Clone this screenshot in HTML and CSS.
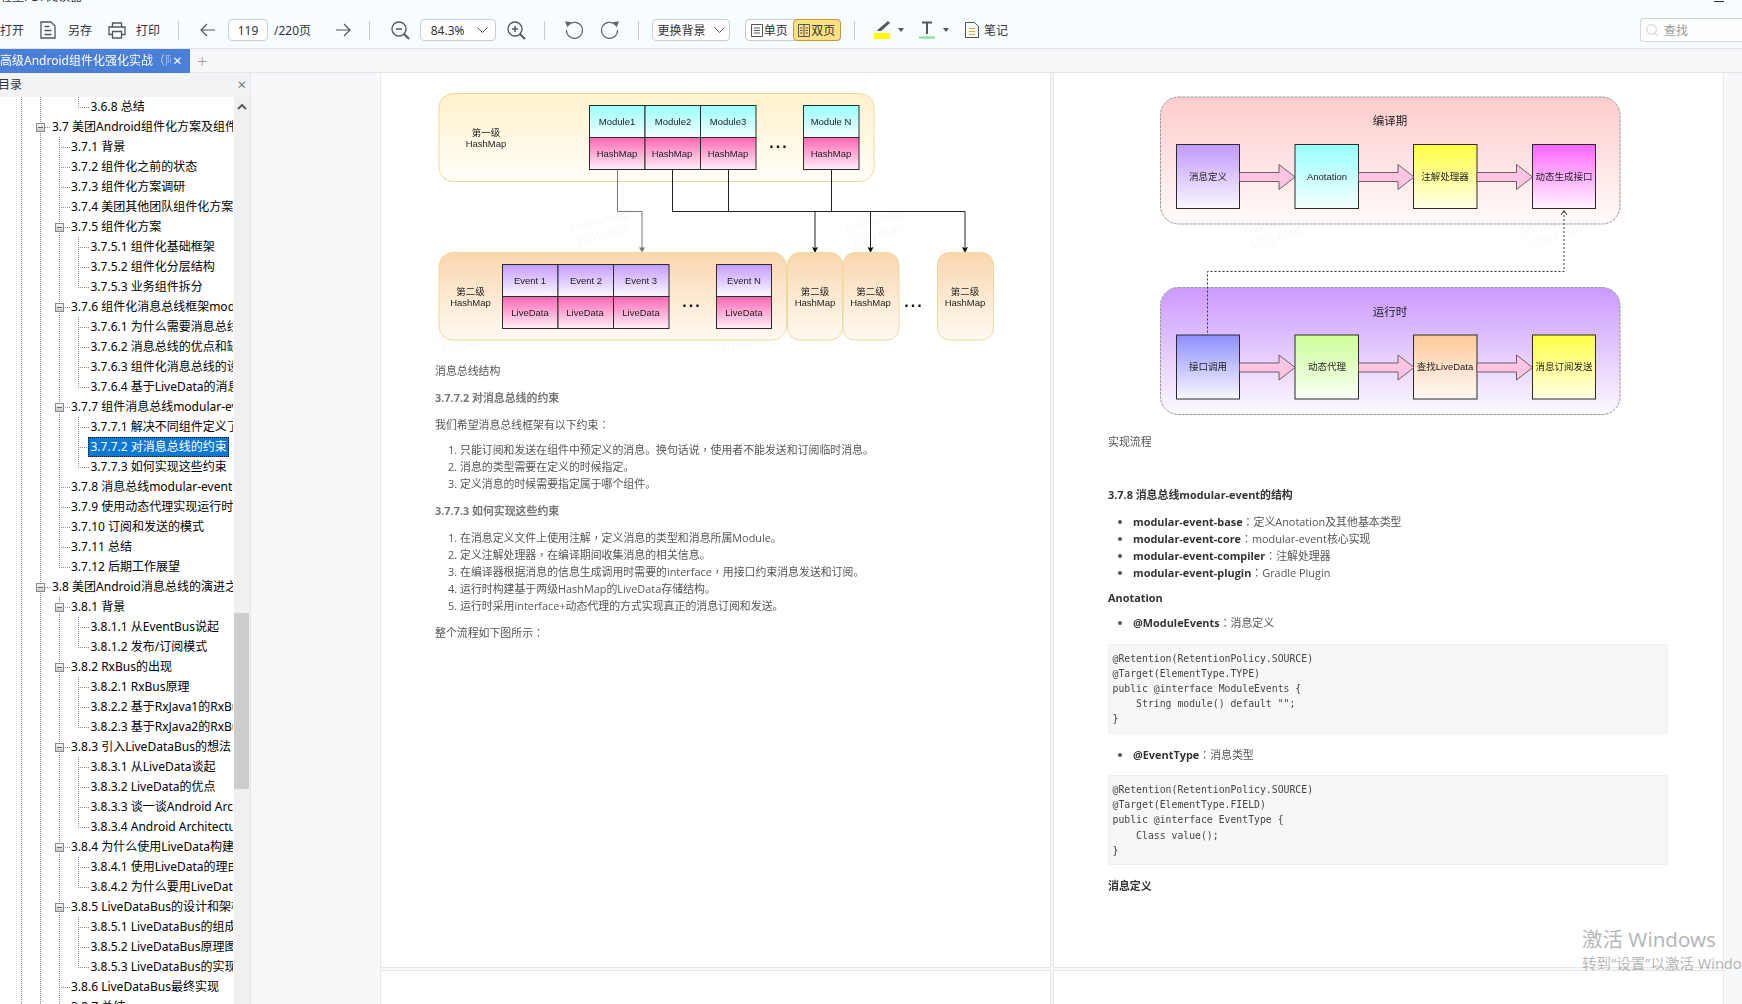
FILE: index.html
```html
<!DOCTYPE html>
<html lang="zh-CN">
<head>
<meta charset="UTF-8" />
<title>PDF阅读器</title>
<link rel="stylesheet" href="styles.css">
</head>
<body>
<div class="app">
  <div class="titlebar">
    <span class="app-name">轻量PDF阅读器</span>
    <span class="min-btn"></span>
  </div>

  <div class="toolbar">
    <span class="label">打开</span>
    <svg class="ico save" width="16" height="18" viewBox="0 0 16 18"><path d="M1 1h10l4 4v12H1z M4.500 5.500h5 M4.500 9.500h7 M4.500 13.500h7" fill="none" stroke="#555" stroke-width="1.300"/></svg>
    <span class="label gap12">另存</span>
    <svg class="ico print" width="18" height="17" viewBox="0 0 18 17"><path d="M4.500 5V1h9v4 M4 12.500H1V5h16v7.500h-3 M4.500 9.500h9V16h-9z" fill="none" stroke="#555" stroke-width="1.300"/></svg>
    <span class="label gap10">打印</span>
    <span class="sep"></span>

    <svg class="ico back" width="15" height="14" viewBox="0 0 15 14"><path d="M15 7H1 M7 1L1 7l6 6" fill="none" stroke="#555" stroke-width="1.200"/></svg>
    <span class="field page-no">119</span>
    <span class="label total">/220页</span>
    <svg class="ico next" width="15" height="14" viewBox="0 0 15 14"><path d="M0 7h14 M8 1l6 6-6 6" fill="none" stroke="#555" stroke-width="1.200"/></svg>
    <span class="sep"></span>

    <svg class="ico zoom-out" width="19" height="19" viewBox="0 0 19 19"><circle cx="8" cy="8" r="7" fill="none" stroke="#555" stroke-width="1.300"/><path d="M5 8h6" stroke="#555" stroke-width="1.500"/><path d="M13 13l5 5" stroke="#555" stroke-width="2"/></svg>
    <span class="field zoom-select">84.3%<svg width="11" height="6" viewBox="0 0 11 6"><path d="M.500.500l5 5 5-5" fill="none" stroke="#555"/></svg></span>
    <svg class="ico zoom-in" width="19" height="19" viewBox="0 0 19 19"><circle cx="8" cy="8" r="7" fill="none" stroke="#555" stroke-width="1.300"/><path d="M5 8h6 M8 5v6" stroke="#555" stroke-width="1.500"/><path d="M13 13l5 5" stroke="#555" stroke-width="2"/></svg>
    <span class="sep"></span>

    <svg class="ico undo" width="20" height="19" viewBox="0 0 20 19"><path d="M5 3.500A8 8 0 1 1 2.500 9" fill="none" stroke="#666" stroke-width="1.200"/><path d="M1 .500l6 .500-3.500 5.500z" fill="#666"/></svg>
    <svg class="ico redo" width="20" height="19" viewBox="0 0 20 19"><path d="M15 3.500A8 8 0 1 0 17.500 9" fill="none" stroke="#666" stroke-width="1.200"/><path d="M19 .500l-6 .500 3.500 5.500z" fill="#666"/></svg>
    <span class="sep"></span>

    <span class="field bg-select">更换背景<svg width="11" height="6" viewBox="0 0 11 6"><path d="M.500.500l5 5 5-5" fill="none" stroke="#555"/></svg></span>

    <div class="seg">
      <span class="seg-item"><svg width="12" height="13" viewBox="0 0 12 13"><path d="M.500.500h11v12H.500z M3 4h6 M3 6.500h6 M3 9h6" fill="none" stroke="#555"/></svg>单页</span>
      <span class="seg-item on"><svg width="12" height="13" viewBox="0 0 12 13"><path d="M.500.500h11v12H.500z M6 .500v12 M2 4h2.500 M2 6.500h2.500 M2 9h2.500 M7.500 4H10 M7.500 6.500H10 M7.500 9H10" fill="none" stroke="#555"/></svg>双页</span>
    </div>
    <span class="sep sep-tools"></span>

    <svg class="ico pen" width="16" height="18" viewBox="0 0 16 18"><path d="M14 0l2 2-9 8H3.500L3 9.500z" fill="#555"/><path d="M0 12h16v6H0z" fill="#ffff00"/></svg>
    <span class="caret"></span>
    <svg class="ico text-tool" width="16" height="18" viewBox="0 0 16 18"><path d="M3 1.500h10 M8 1.500V13" fill="none" stroke="#555" stroke-width="2"/><path d="M0 16.500h16" stroke="#7ed99a" stroke-width="2"/></svg>
    <span class="caret"></span>
    <svg class="ico note" width="14" height="16" viewBox="0 0 14 16"><path d="M.500.500h9l4 4v11H.500z" fill="none" stroke="#555"/><path d="M4 6.500h6 M4 9.500h6 M4 12.500h6" stroke="#e2a33a"/></svg>
    <span class="label gap5">笔记</span>

    <div class="search">
      <svg width="12" height="13" viewBox="0 0 12 13"><circle cx="5.500" cy="5.500" r="4.800" fill="none" stroke="#ccc"/><path d="M9 9l3 3.500" stroke="#ccc"/></svg>
      <span>查找</span>
    </div>
  </div>

  <div class="tabbar">
    <div class="tab"><span class="tab-name">高级Android组件化强化实战（阿</span><span class="tab-close">×</span></div>
    <span class="tab-add">+</span>
  </div>

  <div class="body">
    <aside class="sidebar">
      <div class="side-head"><span class="side-title">目录</span><span class="side-close">×</span></div>
      <div class="tree-wrap">
        <div class="tree">
          <div class="row l4 last no59">3.6.8 总结</div>
          <div class="row l2"><i class="exp"></i>3.7 美团Android组件化方案及组件消息总线modular-event实战</div>
          <div class="row l3">3.7.1 背景</div>
          <div class="row l3">3.7.2 组件化之前的状态</div>
          <div class="row l3">3.7.3 组件化方案调研</div>
          <div class="row l3">3.7.4 美团其他团队组件化方案</div>
          <div class="row l3"><i class="exp"></i>3.7.5 组件化方案</div>
          <div class="row l4">3.7.5.1 组件化基础框架</div>
          <div class="row l4">3.7.5.2 组件化分层结构</div>
          <div class="row l4 last">3.7.5.3 业务组件拆分</div>
          <div class="row l3"><i class="exp"></i>3.7.6 组件化消息总线框架modular-event</div>
          <div class="row l4">3.7.6.1 为什么需要消息总线</div>
          <div class="row l4">3.7.6.2 消息总线的优点和缺点</div>
          <div class="row l4">3.7.6.3 组件化消息总线的设计难点</div>
          <div class="row l4 last">3.7.6.4 基于LiveData的消息总线</div>
          <div class="row l3"><i class="exp"></i>3.7.7 组件消息总线modular-event的实现</div>
          <div class="row l4">3.7.7.1 解决不同组件定义了相同的消息</div>
          <div class="row l4"><span class="selected">3.7.7.2 对消息总线的约束</span></div>
          <div class="row l4 last">3.7.7.3 如何实现这些约束</div>
          <div class="row l3">3.7.8 消息总线modular-event的结构</div>
          <div class="row l3">3.7.9 使用动态代理实现运行时注册</div>
          <div class="row l3">3.7.10 订阅和发送的模式</div>
          <div class="row l3">3.7.11 总结</div>
          <div class="row l3 last3">3.7.12 后期工作展望</div>
          <div class="row l2"><i class="exp"></i>3.8 美团Android消息总线的演进之路</div>
          <div class="row l3"><i class="exp"></i>3.8.1 背景</div>
          <div class="row l4">3.8.1.1 从EventBus说起</div>
          <div class="row l4 last">3.8.1.2 发布/订阅模式</div>
          <div class="row l3"><i class="exp"></i>3.8.2 RxBus的出现</div>
          <div class="row l4">3.8.2.1 RxBus原理</div>
          <div class="row l4">3.8.2.2 基于RxJava1的RxBus实现</div>
          <div class="row l4 last">3.8.2.3 基于RxJava2的RxBus实现</div>
          <div class="row l3"><i class="exp"></i>3.8.3 引入LiveDataBus的想法</div>
          <div class="row l4">3.8.3.1 从LiveData谈起</div>
          <div class="row l4">3.8.3.2 LiveData的优点</div>
          <div class="row l4">3.8.3.3 谈一谈Android Architecture Components</div>
          <div class="row l4 last">3.8.3.4 Android Architecture Components</div>
          <div class="row l3"><i class="exp"></i>3.8.4 为什么使用LiveData构建数据通信总线</div>
          <div class="row l4">3.8.4.1 使用LiveData的理由</div>
          <div class="row l4 last">3.8.4.2 为什么要用LiveDataBus</div>
          <div class="row l3"><i class="exp"></i>3.8.5 LiveDataBus的设计和架构</div>
          <div class="row l4">3.8.5.1 LiveDataBus的组成</div>
          <div class="row l4">3.8.5.2 LiveDataBus原理图</div>
          <div class="row l4 last">3.8.5.3 LiveDataBus的实现</div>
          <div class="row l3">3.8.6 LiveDataBus最终实现</div>
          <div class="row l3">3.8.7 总结</div>
        </div>
        <div class="scrollbar">
          <svg class="scroll-up" width="10" height="6" viewBox="0 0 10 6"><path d="M1 5l4-4 4 4" fill="none" stroke="#555" stroke-width="1.800"/></svg>
          <div class="thumb"></div>
        </div>
      </div>
    </aside>

    <main class="viewer">
      <div class="pages">
        <section class="page">
          <svg class="fig fig-bus" width="669" height="279" viewBox="381 73 669 279">
            <defs>
              <linearGradient id="gYellow" x1="0" y1="0" x2="0" y2="1"><stop offset="0" stop-color="#fff2cc"/><stop offset="1" stop-color="#fffef9"/></linearGradient>
              <linearGradient id="gOrange" x1="0" y1="0" x2="0" y2="1"><stop offset="0" stop-color="#fad7ac"/><stop offset="1" stop-color="#fffaf4"/></linearGradient>
              <linearGradient id="gCyan" x1="0" y1="0" x2="0" y2="1"><stop offset="0" stop-color="#99ffff"/><stop offset="1" stop-color="#f2ffff"/></linearGradient>
              <linearGradient id="gPink" x1="0" y1="0" x2="0" y2="1"><stop offset="0" stop-color="#ff66b3"/><stop offset="1" stop-color="#fff0f8"/></linearGradient>
              <linearGradient id="gPurple" x1="0" y1="0" x2="0" y2="1"><stop offset="0" stop-color="#c59cff"/><stop offset="1" stop-color="#fbf8ff"/></linearGradient>
            </defs>

            <g class="mark">
              <text transform="translate(437 122) rotate(-15)">liaohailiang<tspan x="2" dy="15">12014649</tspan></text>
              <text transform="translate(710 115) rotate(-15)">liaohailiang<tspan x="2" dy="15">12014649</tspan></text>
              <text transform="translate(571 232) rotate(-15)">liaohailiang<tspan x="2" dy="15">12014649</tspan></text>
              <text transform="translate(847 232) rotate(-15)">liaohailiang<tspan x="2" dy="15">12014649</tspan></text>
              <text transform="translate(437 341) rotate(-15)">liaohailiang<tspan x="2" dy="15">12014649</tspan></text>
              <text transform="translate(710 341) rotate(-15)">liaohailiang<tspan x="2" dy="15">12014649</tspan></text>
            </g>

            <rect class="group" x="439" y="93.500" width="435" height="88" rx="14" fill="url(#gYellow)"/>
            <g class="cells">
              <rect x="589.500" y="105.500" width="55.500" height="32" fill="url(#gCyan)"/>
              <rect x="645" y="105.500" width="55.500" height="32" fill="url(#gCyan)"/>
              <rect x="700.500" y="105.500" width="55.500" height="32" fill="url(#gCyan)"/>
              <rect x="803.500" y="105.500" width="55.500" height="32" fill="url(#gCyan)"/>
              <rect x="589.500" y="137.500" width="55.500" height="32" fill="url(#gPink)"/>
              <rect x="645" y="137.500" width="55.500" height="32" fill="url(#gPink)"/>
              <rect x="700.500" y="137.500" width="55.500" height="32" fill="url(#gPink)"/>
              <rect x="803.500" y="137.500" width="55.500" height="32" fill="url(#gPink)"/>
            </g>
            <g class="txt">
              <text x="486" y="136">第一级</text><text x="486" y="147">HashMap</text>
              <text x="617" y="125">Module1</text><text x="673" y="125">Module2</text><text x="728" y="125">Module3</text><text x="831" y="125">Module N</text>
              <text x="617" y="157">HashMap</text><text x="672" y="157">HashMap</text><text x="728" y="157">HashMap</text><text x="831" y="157">HashMap</text>
            </g>
            <text class="dots" x="779" y="148">...</text>

            <path class="link thin" d="M617.500 169.500V211.500H642V248"/>
            <path class="tip thin-tip" d="M639 247.500h6l-3 5z"/>
            <path class="link" d="M672.500 169.500V211.500H965V248 M728.500 169.500V211.500 M831.500 169.500V211.500 M815 211.500V248 M870.500 211.500V248"/>
            <path class="tip" d="M812 247l3 1 3-1-3 6z M867.500 247l3 1 3-1-3 6z M962 247l3 1 3-1-3 6z"/>

            <rect class="group" x="439" y="252.500" width="347.500" height="87.500" rx="14" fill="url(#gOrange)"/>
            <rect class="group" x="787.500" y="252.500" width="55" height="87.500" rx="12" fill="url(#gOrange)"/>
            <rect class="group" x="843" y="252.500" width="56" height="87.500" rx="12" fill="url(#gOrange)"/>
            <rect class="group" x="937.500" y="252.500" width="56" height="87.500" rx="12" fill="url(#gOrange)"/>
            <g class="cells">
              <rect x="502.500" y="264.500" width="55.500" height="32" fill="url(#gPurple)"/>
              <rect x="558" y="264.500" width="55.500" height="32" fill="url(#gPurple)"/>
              <rect x="613.500" y="264.500" width="55.500" height="32" fill="url(#gPurple)"/>
              <rect x="716.500" y="264.500" width="55" height="32" fill="url(#gPurple)"/>
              <rect x="502.500" y="296.500" width="55.500" height="32" fill="url(#gPink)"/>
              <rect x="558" y="296.500" width="55.500" height="32" fill="url(#gPink)"/>
              <rect x="613.500" y="296.500" width="55.500" height="32" fill="url(#gPink)"/>
              <rect x="716.500" y="296.500" width="55" height="32" fill="url(#gPink)"/>
            </g>
            <g class="txt">
              <text x="470.500" y="295">第二级</text><text x="470.500" y="306">HashMap</text>
              <text x="815" y="295">第二级</text><text x="815" y="306">HashMap</text>
              <text x="870.500" y="295">第二级</text><text x="870.500" y="306">HashMap</text>
              <text x="965" y="295">第二级</text><text x="965" y="306">HashMap</text>
              <text x="530" y="284">Event 1</text><text x="586" y="284">Event 2</text><text x="641" y="284">Event 3</text><text x="744" y="284">Event N</text>
              <text x="530" y="316">LiveData</text><text x="585" y="316">LiveData</text><text x="641" y="316">LiveData</text><text x="744" y="316">LiveData</text>
            </g>
            <text class="dots" x="692" y="307">...</text>
            <text class="dots" x="914" y="307">...</text>
          </svg>

          <div class="doc">
            <p>消息总线结构</p>
            <p class="sub">3.7.7.2 对消息总线的约束</p>
            <p>我们希望消息总线框架有以下约束<span class="pn" lang="zh-Hant">：</span></p>
            <ol class="tight">
              <li>只能订阅和发送在组件中预定义的消息。换句话说<span class="pn" lang="zh-Hant">，</span>使用者不能发送和订阅临时消息。</li>
              <li>消息的类型需要在定义的时候指定。</li>
              <li>定义消息的时候需要指定属于哪个组件。</li>
            </ol>
            <p class="sub">3.7.7.3 如何实现这些约束</p>
            <ol>
              <li>在消息定义文件上使用注解<span class="pn" lang="zh-Hant">，</span>定义消息的类型和消息所属Module。</li>
              <li>定义注解处理器<span class="pn" lang="zh-Hant">，</span>在编译期间收集消息的相关信息。</li>
              <li>在编译器根据消息的信息生成调用时需要的interface<span class="pn" lang="zh-Hant">，</span>用接口约束消息发送和订阅。</li>
              <li>运行时构建基于两级HashMap的LiveData存储结构。</li>
              <li>运行时采用interface+动态代理的方式实现真正的消息订阅和发送。</li>
            </ol>
            <p>整个流程如下图所示<span class="pn" lang="zh-Hant">：</span></p>
          </div>
        </section>

        <section class="page">
          <svg class="fig fig-flow" width="669" height="350" viewBox="1054 73 669 350">
            <defs>
              <linearGradient id="fRed" x1="0" y1="0" x2="0" y2="1"><stop offset="0" stop-color="#ffcccc"/><stop offset="1" stop-color="#fffafa"/></linearGradient>
              <linearGradient id="fViolet" x1="0" y1="0" x2="0" y2="1"><stop offset="0" stop-color="#cc99ff"/><stop offset="1" stop-color="#fcfaff"/></linearGradient>
              <linearGradient id="c1" x1="0" y1="0" x2="0" y2="1"><stop offset="0" stop-color="#c199fc"/><stop offset="1" stop-color="#fbf8ff"/></linearGradient>
              <linearGradient id="c2" x1="0" y1="0" x2="0" y2="1"><stop offset="0" stop-color="#99ffff"/><stop offset="1" stop-color="#f5ffff"/></linearGradient>
              <linearGradient id="c3" x1="0" y1="0" x2="0" y2="1"><stop offset="0" stop-color="#ffff44"/><stop offset="1" stop-color="#ffffe8"/></linearGradient>
              <linearGradient id="c4" x1="0" y1="0" x2="0" y2="1"><stop offset="0" stop-color="#ff66ff"/><stop offset="1" stop-color="#fff5ff"/></linearGradient>
              <linearGradient id="c5" x1="0" y1="0" x2="0" y2="1"><stop offset="0" stop-color="#8f8fff"/><stop offset="1" stop-color="#f8f8ff"/></linearGradient>
              <linearGradient id="c6" x1="0" y1="0" x2="0" y2="1"><stop offset="0" stop-color="#ccff99"/><stop offset="1" stop-color="#fafff5"/></linearGradient>
              <linearGradient id="c7" x1="0" y1="0" x2="0" y2="1"><stop offset="0" stop-color="#ffc999"/><stop offset="1" stop-color="#fffaf5"/></linearGradient>
            </defs>

            <g class="mark">
              <text transform="translate(1385 117) rotate(-15)">liaohailiang<tspan x="2" dy="15">12014649</tspan></text>
              <text transform="translate(1245 235) rotate(-15)">liaohailiang<tspan x="2" dy="15">12014649</tspan></text>
              <text transform="translate(1522 235) rotate(-15)">liaohailiang<tspan x="2" dy="15">12014649</tspan></text>
              <text transform="translate(1385 345) rotate(-15)">liaohailiang<tspan x="2" dy="15">12014649</tspan></text>
            </g>

            <rect class="frame" x="1160.500" y="97" width="459.500" height="127" rx="18" fill="url(#fRed)"/>
            <rect class="frame" x="1160.500" y="287.500" width="459.500" height="127" rx="18" fill="url(#fViolet)"/>

            <path class="dash" d="M1564 211V271.500H1207.500V335"/>
            <path class="dash-tip" d="M1561 215l3-4.500 3 4.500"/>

            <g class="cells">
              <rect x="1176.500" y="144.500" width="63" height="64" fill="url(#c1)"/>
              <rect x="1295" y="144.500" width="63.500" height="64" fill="url(#c2)"/>
              <rect x="1413.500" y="144.500" width="63.500" height="64" fill="url(#c3)"/>
              <rect x="1532.500" y="144.500" width="63" height="64" fill="url(#c4)"/>
              <rect x="1176.500" y="335" width="63" height="64" fill="url(#c5)"/>
              <rect x="1295" y="335" width="63.500" height="64" fill="url(#c6)"/>
              <rect x="1413.500" y="335" width="63.500" height="64" fill="url(#c7)"/>
              <rect x="1532.500" y="335" width="63" height="64" fill="url(#c3)"/>
            </g>

            <g class="fat">
              <path d="M1239.500 172.500h39.500v-8l16 12.500-16 12.500v-8h-39.500z"/>
              <path d="M1358.500 172.500h39.500v-8l16 12.500-16 12.500v-8h-39.500z"/>
              <path d="M1477 172.500h39.500v-8l16 12.500-16 12.500v-8h-39.500z"/>
              <path d="M1239.500 363h39.500v-8l16 12.500-16 12.500v-8h-39.500z"/>
              <path d="M1358.500 363h39.500v-8l16 12.500-16 12.500v-8h-39.500z"/>
              <path d="M1477 363h39.500v-8l16 12.500-16 12.500v-8h-39.500z"/>
            </g>

            <g class="title"><text x="1390" y="125">编译期</text><text x="1390" y="316">运行时</text></g>
            <g class="txt">
              <text x="1208" y="180">消息定义</text><text x="1327" y="180">Anotation</text><text x="1445" y="180">注解处理器</text><text x="1564" y="180">动态生成接口</text>
              <text x="1208" y="370">接口调用</text><text x="1327" y="370">动态代理</text><text x="1445" y="370">查找LiveData</text><text x="1564" y="370">消息订阅发送</text>
            </g>
          </svg>

          <div class="doc">
            <p>实现流程</p>
            <p class="strong gap-top">3.7.8 消息总线modular-event的结构</p>
            <ul>
              <li><b>modular-event-base</b><span class="pn" lang="zh-Hant">：</span>定义Anotation及其他基本类型</li>
              <li><b>modular-event-core</b><span class="pn" lang="zh-Hant">：</span>modular-event核心实现</li>
              <li><b>modular-event-compiler</b><span class="pn" lang="zh-Hant">：</span>注解处理器</li>
              <li><b>modular-event-plugin</b><span class="pn" lang="zh-Hant">：</span>Gradle Plugin</li>
            </ul>
            <p class="strong close">Anotation</p>
            <ul class="close">
              <li><b>@ModuleEvents</b><span class="pn" lang="zh-Hant">：</span>消息定义</li>
            </ul>
<pre>@Retention(RetentionPolicy.SOURCE)
@Target(ElementType.TYPE)
public @interface ModuleEvents {
    String module() default "";
}</pre>
            <ul>
              <li><b>@EventType</b><span class="pn" lang="zh-Hant">：</span>消息类型</li>
            </ul>
<pre>@Retention(RetentionPolicy.SOURCE)
@Target(ElementType.FIELD)
public @interface EventType {
    Class value();
}</pre>
            <p class="strong">消息定义</p>
          </div>
        </section>

        <section class="page page-next"></section>
        <section class="page page-next"></section>
      </div>
    </main>
  </div>

  <div class="activate">
    <div class="activate-big">激活 Windows</div>
    <div class="activate-small">转到“设置”以激活 Windows。</div>
  </div>
</div>
</body>
</html>
```

FILE: styles.css
```css
* {
  box-sizing: border-box;
}
html, body {
  margin: 0;
  height: 100%;
  overflow: hidden;
}
body {
  font-family: "Noto Sans", "Noto Sans CJK SC", sans-serif;
  font-size: 12px;
  color: #333;
}
.app {
  position: relative;
  width: 1742px;
  height: 1004px;
  display: flex;
  flex-direction: column;
  overflow: hidden;
  background: #f7f8fa;
}

/* title bar, only its bottom edge is on screen */
.titlebar {
  height: 4px;
  flex: none;
  display: flex;
  justify-content: space-between;
  background: #f7fcff;
  overflow: hidden;
}
.app-name {
  line-height: 12px;
  margin-top: -9px;
  white-space: nowrap;
}
.min-btn {
  width: 10px;
  height: 1px;
  margin: 1px 18px 0 0;
  background: #333;
}

/* toolbar */
.toolbar {
  height: 45px;
  flex: none;
  display: flex;
  align-items: center;
  background: #f7fcff;
  border-bottom: 1px solid #e3e5e8;
  padding-top: 8px;
}
.label {
  white-space: nowrap;
}
.ico {
  flex: none;
}
.sep {
  width: 1px;
  height: 19px;
  flex: none;
  background: #c8cacc;
  margin: 0 18px;
}
.field {
  height: 22px;
  border: 1px solid #c9ccd0;
  border-radius: 4px;
  background: #fff;
  display: flex;
  align-items: center;
  justify-content: center;
  flex: none;
}
.save { margin-left: 16px; }
.print { margin-left: 16px; }
.gap12 { margin-left: 12px; }
.gap10 { margin-left: 10px; }
.gap5 { margin-left: 5px; }
.back { margin-left: 3px; }
.page-no {
  width: 40px;
  margin-left: 13px;
}
.total { margin-left: 6px; }
.next { margin-left: 25px; }
.zoom-out { margin-left: 3px; }
.zoom-select {
  width: 76px;
  margin-left: 10px;
  gap: 12px;
  padding-left: 2px;
}
.zoom-in { margin-left: 11px; }
.undo { margin-left: 1px; }
.redo { margin-left: 16px; }
.bg-select {
  width: 78px;
  margin-left: -5px;
  gap: 8px;
}
.seg {
  display: flex;
  height: 22px;
  width: 96px;
  margin-left: 15px;
  flex: none;
  border: 1px solid #c9ccd0;
  border-radius: 4px;
  background: #fff;
}
.seg-item {
  flex: 1;
  display: flex;
  align-items: center;
  justify-content: center;
  gap: 1px;
  margin: -1px 0;
}
.seg-item.on {
  margin-right: -1px;
  background: #ffe082;
  border: 1px solid #c8963e;
  border-radius: 4px;
}
.sep-tools { margin: 0 19px 0 13px; }
.caret {
  width: 0;
  height: 0;
  flex: none;
  margin: 0 15px 0 8px;
  border-left: 3px solid transparent;
  border-right: 3px solid transparent;
  border-top: 4px solid #555;
}
.text-tool + .caret { margin-right: 16px; }
.search {
  margin-left: auto;
  width: 102px;
  height: 24px;
  flex: none;
  display: flex;
  align-items: center;
  gap: 6px;
  padding-left: 5px;
  border: 1px solid #d4d6d9;
  border-right: 0;
  border-radius: 4px 0 0 4px;
  color: #999;
  background: #fdfefe;
}

/* tabs */
.tabbar {
  height: 24px;
  flex: none;
  display: flex;
  align-items: center;
  background: #f7f8fa;
  border-bottom: 1px solid #e3e5e8;
}
.tab {
  width: 190px;
  height: 24px;
  display: flex;
  align-items: center;
  padding-bottom: 2px;
  background: #4a7fd8;
  color: #fff;
}
.tab-name {
  width: 171px;
  overflow: hidden;
  white-space: nowrap;
  -webkit-mask-image: linear-gradient(to right, #000 86%, rgba(0, 0, 0, 0.4));
  mask-image: linear-gradient(to right, #000 86%, rgba(0, 0, 0, 0.4));
}
.tab-close {
  font-size: 15px;
  margin-left: 2px;
}
.tab-add {
  margin-left: 7px;
  font-size: 18px;
  font-weight: 300;
  color: #999;
}

.body {
  flex: 1;
  display: flex;
  min-height: 0;
}

/* outline */
.sidebar {
  width: 251px;
  flex: none;
  display: flex;
  flex-direction: column;
  background: #fff;
  border-right: 1px solid #e3e5e8;
}
.side-head {
  height: 24px;
  flex: none;
  display: flex;
  align-items: center;
  justify-content: space-between;
  padding: 0 4px 2px 0;
  background: #f2f3f5;
}
.side-title {
  margin-left: -2px;
}
.side-close {
  font-size: 15px;
  color: #777;
}
.tree-wrap {
  flex: 1;
  display: flex;
  min-height: 0;
}
.tree {
  width: 233px;
  margin-right: 1px;
  flex: none;
  overflow: hidden;
}
.row {
  --dot: repeating-linear-gradient(to bottom, #888 0 1px, transparent 1px 2px);
  --dash: repeating-linear-gradient(to right, #888 0 1px, transparent 1px 2px);
  height: 20px;
  line-height: 20px;
  white-space: nowrap;
  overflow: hidden;
  color: #000;
  background-image: var(--dot), var(--dot), var(--dot), var(--dot), var(--dash);
  background-repeat: no-repeat;
  background-size: 1px 100%, 1px 100%, 1px var(--h59), 1px var(--h78), var(--stub-w) 1px;
  background-position: 21px 0, 40px 0, 59px 0, 78px 0, var(--stub-x) 50%;
}
.l2 {
  --h59: 0;
  --h78: 0;
  --stub-x: 45px;
  --stub-w: 5px;
  padding-left: 52px;
}
.l3 {
  --h59: 100%;
  --h78: 0;
  --stub-x: 59px;
  --stub-w: 11px;
  padding-left: 71px;
}
.l4 {
  --h59: 100%;
  --h78: 100%;
  --stub-x: 78px;
  --stub-w: 11px;
  padding-left: 90.500px;
}
.l4.last { --h78: 50%; }
.no59 { --h59: 0; }
.last3 { --h59: 50%; }
.exp {
  display: inline-block;
  width: 9px;
  height: 9px;
  margin-left: -16px;
  margin-right: 7px;
  vertical-align: -1px;
  border: 1px solid #8a8a8a;
  background: linear-gradient(#666, #666) center / 5px 1px no-repeat, linear-gradient(#f8f8f8, #c8c8c8);
}
.selected {
  display: inline-block;
  height: 20px;
  width: 141px;
  margin-left: -2.500px;
  padding-left: 2.500px;
  background: #0c78d4;
  color: #fff;
  outline: 1px dotted #111;
  outline-offset: -1px;
}
.scrollbar {
  width: 16px;
  flex: none;
  background: #f0f0f0;
}
.scroll-up {
  display: block;
  margin: 7px 0 0 3px;
}
.thumb {
  width: 15px;
  height: 176px;
  margin-top: 503px;
  background: #cdcdcd;
}

/* pages */
.viewer {
  flex: 1;
  min-width: 0;
  overflow: hidden;
  padding-left: 130px;
}
.pages {
  display: grid;
  grid-template-columns: 669px 669px;
  grid-template-rows: 894px 40px;
  column-gap: 4px;
  row-gap: 4px;
}
.page {
  background: #fff;
  outline: 1px solid #e6e7e9;
  overflow: hidden;
}
.fig {
  display: block;
  filter: blur(0.35px);
}
.mark text {
  font-family: "Liberation Sans", sans-serif;
  font-size: 12px;
  fill: #000;
  opacity: 0.03;
}
.group {
  stroke: #ecd9a0;
  stroke-width: 1;
}
.cells rect {
  stroke: #2a2a2a;
  stroke-width: 1;
}
.txt text, .title text {
  font-family: "Liberation Sans", "Noto Sans CJK SC", sans-serif;
  font-size: 9.5px;
  fill: #222;
  text-anchor: middle;
}
.title text {
  font-size: 11.5px;
}
.dots {
  font-family: "Liberation Sans", sans-serif;
  font-size: 16px;
  font-weight: bold;
  letter-spacing: 2px;
  fill: #111;
  text-anchor: middle;
}
.link {
  fill: none;
  stroke: #222;
  stroke-width: 1;
}
.link.thin { stroke: #777; }
.tip { fill: #111; }
.thin-tip { fill: #777; }
.frame {
  stroke: #999;
  stroke-width: 1;
  stroke-dasharray: 3 1;
}
.dash {
  fill: none;
  stroke: #333;
  stroke-width: 1;
  stroke-dasharray: 2 2;
}
.dash-tip {
  fill: none;
  stroke: #333;
}
.fat path {
  fill: #ffc4e1;
  stroke: #444;
  stroke-width: 0.8;
}

.doc {
  padding: 0 55px 0 54px;
  font-family: "Open Sans", "Noto Sans CJK SC", sans-serif;
  font-size: 10.9px;
  line-height: 17px;
  color: #555;
  filter: blur(0.25px);
}
.doc p {
  margin: 10px 0;
  white-space: nowrap;
}
.doc .pn {
  font-family: "Noto Sans CJK TC", sans-serif;
  line-height: 0;
}
.doc .sub {
  color: #777;
  font-weight: 700;
}
.doc .strong {
  color: #333;
  font-weight: 700;
}
.doc .gap-top {
  margin-top: 36px;
}
.doc ol, .doc ul {
  margin: 10px 0;
  padding-left: 25px;
}
/* negative values here because they collapse with the 10px margin above */
.doc ol.tight {
  margin-top: -2.400px;
}
.doc .close {
  margin-top: -2px;
}
.doc li {
  white-space: nowrap;
}
.doc b {
  color: #333;
}
.doc pre {
  height: 90px;
  margin: 12.500px 0 12px;
  padding: 6px 3.500px;
  border: 1px solid #eeeeee;
  border-radius: 2px;
  background: #f7f7f7;
  font-family: "DejaVu Sans Mono", "Liberation Mono", monospace;
  font-size: 9.8px;
  line-height: 15.2px;
  color: #444;
}

/* watermark from the OS, it sits over the window */
.activate {
  position: absolute;
  left: 1582px;
  top: 925px;
  width: 160px;
  overflow: hidden;
  white-space: nowrap;
  color: rgba(120, 120, 120, 0.55);
  pointer-events: none;
}
.activate-big {
  font-size: 20.500px;
  line-height: 28px;
}
.activate-small {
  font-size: 14.500px;
  line-height: 20px;
}
```
